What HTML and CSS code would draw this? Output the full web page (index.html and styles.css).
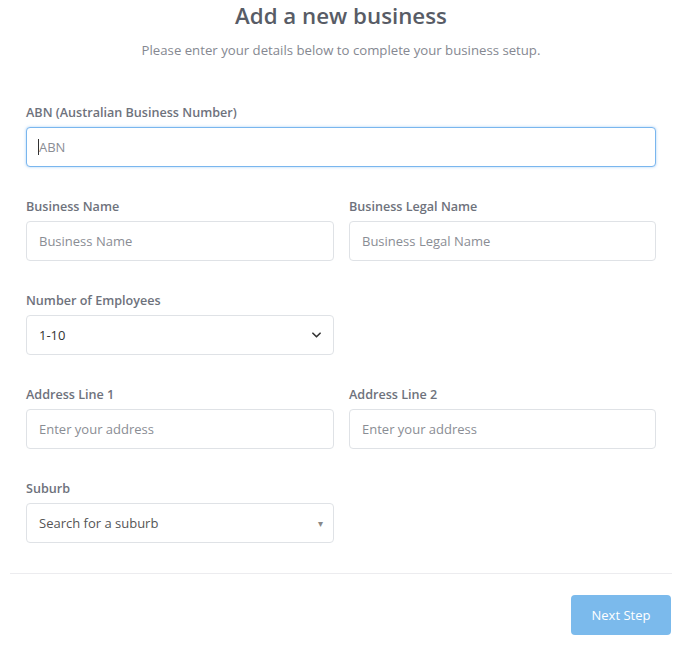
FILE: index.html
```html
<!DOCTYPE html>
<html lang="en">
<head>
    <meta charset="UTF-8">
    <meta name="viewport" content="width=device-width, initial-scale=1.0">
    <title>Add a new business</title>
    <link rel="stylesheet" href="styles.css">
</head>
<body>
    <div class="page">
        <div class="header">
            <h1>Add a new business</h1>
            <p class="subtitle">Please enter your details below to complete your business setup.</p>
        </div>

        <form class="business-form">
            <div class="field full">
                <label for="abn">ABN (Australian Business Number)</label>
                <div class="input-wrap">
                    <span class="cursor"></span>
                    <input type="text" id="abn" class="focused" placeholder="ABN">
                </div>
            </div>

            <div class="field">
                <label for="businessName">Business Name</label>
                <input type="text" id="businessName" placeholder="Business Name">
            </div>
            <div class="field">
                <label for="legalName">Business Legal Name</label>
                <input type="text" id="legalName" placeholder="Business Legal Name">
            </div>

            <div class="field">
                <label for="employees">Number of Employees</label>
                <div class="select-box">
                    <span>1-10</span>
                    <svg class="chevron" viewBox="0 0 10 6" width="9" height="6">
                        <path d="M1 1l4 4 4-4" fill="none" stroke="#333" stroke-width="1.8" stroke-linecap="round" stroke-linejoin="round"/>
                    </svg>
                </div>
            </div>
            <div class="field"></div>

            <div class="field">
                <label for="address1">Address Line 1</label>
                <input type="text" id="address1" placeholder="Enter your address">
            </div>
            <div class="field">
                <label for="address2">Address Line 2</label>
                <input type="text" id="address2" placeholder="Enter your address">
            </div>

            <div class="field">
                <label for="suburb">Suburb</label>
                <div class="select-box suburb">
                    <span>Search for a suburb</span>
                    <span class="caret">&#9662;</span>
                </div>
            </div>
        </form>

        <div class="footer">
            <button type="button">Next Step</button>
        </div>
    </div>
</body>
</html>
```

FILE: styles.css
```css
* {
    margin: 0;
    padding: 0;
    box-sizing: border-box;
    font-family: 'Open Sans', Arial, sans-serif;
}

body {
    background-color: #fff;
    color: #565a64;
}

.page {
    width: 682px;
    height: 646px;
    padding: 0 10px;
}

.header {
    text-align: center;
    padding-top: 1px;
}

.header h1 {
    font-size: 22.3px;
    font-weight: 600;
    line-height: 30px;
    color: #585c66;
}

.subtitle {
    margin-top: 11px;
    font-size: 13.2px;
    line-height: 16px;
    color: #858891;
}

.business-form {
    display: grid;
    grid-template-columns: 308px 307px;
    column-gap: 15px;
    row-gap: 32px;
    padding: 0 16px;
    margin-top: 47px;
}

.field {
    display: flex;
    flex-direction: column;
    gap: 6px;
}

.field.full {
    grid-column: 1 / -1;
}

label {
    font-size: 12.6px;
    font-weight: 600;
    line-height: 16px;
    color: #6e727c;
}

input,
.select-box {
    height: 40px;
    width: 100%;
    padding: 0 12px;
    border: 1px solid #dfe2e6;
    border-radius: 4px;
    background-color: #fff;
    font-size: 13px;
    color: #555;
}

input::placeholder {
    color: #8a8d94;
}

.input-wrap {
    position: relative;
}

input.focused {
    border-color: #7ab6ee;
    box-shadow: 0 0 3px rgba(102, 170, 238, 0.55);
    outline: none;
}

/* text caret sitting before the placeholder */
.cursor {
    position: absolute;
    left: 12px;
    top: 12px;
    width: 1px;
    height: 16px;
    background-color: #333;
}

.select-box {
    display: flex;
    align-items: center;
    justify-content: space-between;
    color: #333;
}

.suburb {
    color: #555;
}

.suburb .caret {
    font-size: 10px;
    color: #888;
    margin-right: -2px;
}

.footer {
    margin-top: 30px;
    border-top: 1px solid #ececef;
    padding-top: 21px;
    display: flex;
    justify-content: flex-end;
}

button {
    width: 100px;
    height: 40px;
    margin-right: 1px;
    border: none;
    border-radius: 4px;
    background-color: #7bbaec;
    color: #fff;
    font-size: 13px;
    cursor: pointer;
}
```
